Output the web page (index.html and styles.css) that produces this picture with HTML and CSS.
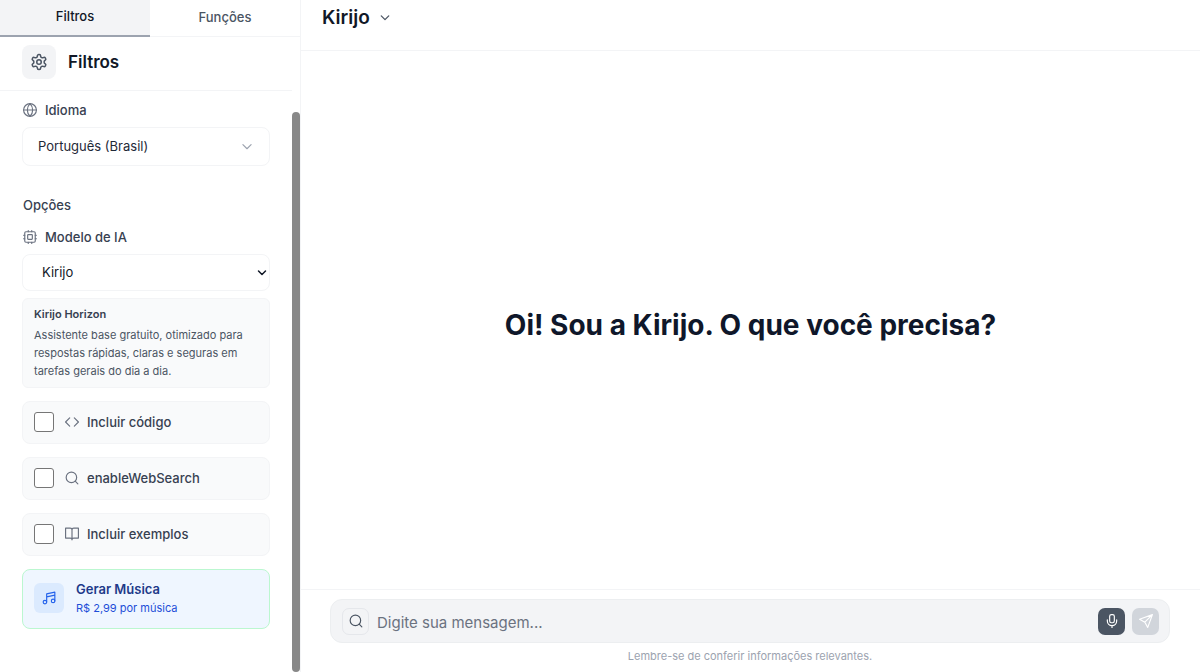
FILE: index.html
```html
<!DOCTYPE html>
<html lang="pt-BR">
<head>
    <meta charset="UTF-8">
    <meta name="viewport" content="width=device-width, initial-scale=1">
    <title>Kirijo</title>
    <link rel="stylesheet" href="styles.css">
</head>
<body>
    <div class="app">
        <aside class="sidebar">
            <div class="tabs">
                <button class="tab active" type="button">Filtros</button>
                <button class="tab" type="button">Funções</button>
            </div>
            <div class="sidebar-body">
                <div class="panel">
                    <div class="panel-header">
                        <span class="panel-icon">
                            <svg class="icon icon-lg" viewBox="0 0 24 24"><path d="M12.22 2h-.44a2 2 0 0 0-2 2v.18a2 2 0 0 1-1 1.73l-.43.25a2 2 0 0 1-2 0l-.15-.08a2 2 0 0 0-2.73.73l-.22.38a2 2 0 0 0 .73 2.73l.15.1a2 2 0 0 1 1 1.72v.51a2 2 0 0 1-1 1.74l-.15.09a2 2 0 0 0-.73 2.73l.22.38a2 2 0 0 0 2.73.73l.15-.08a2 2 0 0 1 2 0l.43.25a2 2 0 0 1 1 1.73V20a2 2 0 0 0 2 2h.44a2 2 0 0 0 2-2v-.18a2 2 0 0 1 1-1.73l.43-.25a2 2 0 0 1 2 0l.15.08a2 2 0 0 0 2.73-.73l.22-.39a2 2 0 0 0-.73-2.73l-.15-.08a2 2 0 0 1-1-1.74v-.5a2 2 0 0 1 1-1.74l.15-.09a2 2 0 0 0 .73-2.73l-.22-.38a2 2 0 0 0-2.73-.73l-.15.08a2 2 0 0 1-2 0l-.43-.25a2 2 0 0 1-1-1.73V4a2 2 0 0 0-2-2z"/><circle cx="12" cy="12" r="3"/></svg>
                        </span>
                        <h2 class="panel-title">Filtros</h2>
                    </div>
                    <div class="panel-content">
                        <label class="field-label" for="idioma">
                            <svg class="icon" viewBox="0 0 24 24"><circle cx="12" cy="12" r="11"/><path d="M12 1a15.500 15.500 0 0 0 0 22 15.500 15.500 0 0 0 0-22M1 12h22"/></svg>
                            Idioma
                        </label>
                        <div class="select-box">
                            <select class="select select-language" id="idioma">
                                <option>Português (Brasil)</option>
                            </select>
                            <svg class="icon chevron chevron-light" viewBox="0 0 24 24"><path d="m5 8 7 7 7-7"/></svg>
                        </div>

                        <h3 class="section-title">Opções</h3>
                        <label class="field-label" for="modelo">
                            <svg class="icon" viewBox="0 0 24 24"><rect x="3" y="3" width="18" height="18" rx="2"/><rect x="8" y="8" width="8" height="8" rx="1"/><path d="M15 1v2M15 21v2M1 15h2M1 9h2M21 15h2M21 9h2M9 1v2M9 21v2"/></svg>
                            Modelo de IA
                        </label>
                        <div class="select-box">
                            <select class="select select-model" id="modelo">
                                <option>Kirijo</option>
                            </select>
                            <svg class="icon chevron chevron-dark" viewBox="0 0 24 24"><path d="m5 8 7 7 7-7"/></svg>
                        </div>
                        <div class="model-info">
                            <div class="model-name">Kirijo Horizon</div>
                            <p class="model-text">Assistente base gratuito, otimizado para respostas rápidas, claras e seguras em tarefas gerais do dia a dia.</p>
                        </div>

                        <div class="options">
                            <label class="option">
                                <input class="checkbox" type="checkbox">
                                <svg class="icon" viewBox="0 0 24 24"><path d="m16 19 7-7-7-7M8 5l-7 7 7 7"/></svg>
                                Incluir código
                            </label>
                            <label class="option">
                                <input class="checkbox" type="checkbox">
                                <svg class="icon" viewBox="0 0 24 24"><circle cx="11" cy="11" r="9"/><path d="m22 22-4.500-4.500"/></svg>
                                enableWebSearch
                            </label>
                            <label class="option">
                                <input class="checkbox" type="checkbox">
                                <svg class="icon" viewBox="0 0 24 24"><path d="M12 5v17M1 2h8a3 3 0 0 1 3 3 3 3 0 0 1 3-3h8v17h-8a3 3 0 0 0-3 3 3 3 0 0 0-3-3H1z"/></svg>
                                Incluir exemplos
                            </label>
                            <button class="music" type="button">
                                <span class="music-icon">
                                    <svg class="icon" viewBox="0 0 24 24"><path d="M8 19V5l14-3v15M8 10l14-3"/><circle cx="5" cy="19" r="3"/><circle cx="19" cy="17" r="3"/></svg>
                                </span>
                                <span class="music-text">
                                    <span class="music-title">Gerar Música</span>
                                    <span class="music-price">R$ 2,99 por música</span>
                                </span>
                            </button>
                        </div>
                    </div>
                </div>
                <div class="scroll-track">
                    <div class="scroll-thumb"></div>
                </div>
            </div>
        </aside>

        <main class="chat">
            <header class="chat-header">
                <button class="model-button" type="button">
                    Kirijo
                    <svg class="icon chevron-small" viewBox="0 0 24 24"><path d="m3 7 9 9 9-9"/></svg>
                </button>
            </header>
            <section class="welcome">
                <h1 class="welcome-title">Oi! Sou a Kirijo. O que você precisa?</h1>
            </section>
            <footer class="chat-footer">
                <form class="composer">
                    <button class="composer-button search-button" type="button" aria-label="Pesquisar">
                        <svg class="icon" viewBox="0 0 24 24"><circle cx="11" cy="11" r="9"/><path d="m22 22-4.500-4.500"/></svg>
                    </button>
                    <input class="composer-input" type="text" placeholder="Digite sua mensagem..." aria-label="Mensagem">
                    <button class="composer-button mic-button" type="button" aria-label="Gravar áudio">
                        <svg class="icon" viewBox="0 0 24 24"><rect x="8" y="1" width="8" height="14" rx="3"/><path d="M20 10v2a8 8 0 0 1-16 0v-2M12 20v4"/></svg>
                    </button>
                    <button class="composer-button send-button" type="submit" aria-label="Enviar">
                        <svg class="icon" viewBox="0 0 24 24"><path d="M23 1 15 23l-5-9-9-5zM23 1 10 14"/></svg>
                    </button>
                </form>
                <p class="notice">Lembre-se de conferir informações relevantes.</p>
            </footer>
        </main>
    </div>
</body>
</html>
```
FILE: styles.css
```css
* {
    box-sizing: border-box;
}
body {
    margin: 0;
    font-family: Inter, "Liberation Sans", sans-serif;
    font-size: 14px;
    line-height: 20px;
    color: #111827;
    background: #fff;
}
h1, h2, h3, p {
    margin: 0;
}
button, input, select {
    font: inherit;
    color: inherit;
}
button {
    padding: 0;
    border: none;
    background: none;
    cursor: pointer;
}
.icon {
    width: 14px;
    height: 14px;
    flex-shrink: 0;
    fill: none;
    stroke: currentColor;
    stroke-width: 2;
    stroke-linecap: round;
    stroke-linejoin: round;
}
.icon-lg {
    width: 18px;
    height: 18px;
}
.app {
    display: flex;
    height: 100vh;
    overflow: hidden;
}

/* sidebar */
.sidebar {
    display: flex;
    flex-direction: column;
    flex: 0 0 300px;
}
.tabs {
    display: flex;
    height: 37px;
    flex-shrink: 0;
}
.tab {
    flex: 1;
    padding-bottom: 2px;
    font-size: 13px;
    font-weight: 500;
    color: #4b5563;
    border-bottom: 1px solid #f3f4f6;
}
.tab.active {
    padding-bottom: 4px;
    color: #111827;
    background: #f3f4f6;
    border-bottom: 2px solid #9ca3af;
}
.sidebar-body {
    display: flex;
    flex: 1;
    min-height: 0;
}
.panel {
    flex: 1;
    min-width: 0;
}
.panel-header {
    display: flex;
    align-items: center;
    gap: 12px;
    height: 54px;
    padding: 0 22px 4px;
    border-bottom: 1px solid #f3f4f6;
}
.panel-icon {
    display: flex;
    align-items: center;
    justify-content: center;
    width: 34px;
    height: 34px;
    color: #4b5563;
    background: #f3f4f6;
    border-radius: 8px;
}
.panel-title {
    font-size: 17px;
    font-weight: 600;
}
.panel-content {
    padding: 9px 22px 0;
}
.field-label {
    display: flex;
    align-items: center;
    gap: 8px;
    margin-bottom: 7px;
    padding-left: 1px;
    font-size: 13px;
    font-weight: 500;
    color: #374151;
}
.field-label .icon {
    color: #6b7280;
}
.select-box {
    display: grid;
    align-items: center;
}
.select-box > * {
    grid-area: 1 / 1;
}
.select {
    width: 100%;
    padding-bottom: 2px;
    border: 1px solid #f3f4f6;
    border-radius: 8px;
    background: #fff;
    font-size: 13px;
    appearance: none;
}
.select-language {
    height: 39px;
    padding-left: 15px;
    color: #1f2937;
}
.select-model {
    height: 37px;
    padding-left: 19px;
}
.chevron {
    justify-self: end;
    pointer-events: none;
}
.chevron-light {
    margin-right: 16px;
    color: #9ca3af;
}
.chevron-dark {
    width: 12px;
    margin-right: 2px;
    stroke-width: 3;
}
.section-title {
    margin: 29px 0 12px;
    padding-left: 1px;
    font-size: 13px;
    font-weight: 500;
    color: #374151;
}
.model-info {
    margin-top: 7px;
    padding: 6px 11px 7px;
    border: 1px solid #f3f4f6;
    border-radius: 6px;
    background: #f9fafb;
}
.model-name {
    font-size: 11px;
    font-weight: 600;
    line-height: 18px;
    color: #374151;
    margin-bottom: 3px;
}
.model-text {
    font-size: 11px;
    line-height: 18px;
    color: #4b5563;
}
.options {
    display: flex;
    flex-direction: column;
    gap: 13px;
    margin-top: 13px;
}
.option {
    display: flex;
    align-items: center;
    gap: 8px;
    height: 43px;
    padding: 0 11px 2px;
    border: 1px solid #f3f4f6;
    border-radius: 8px;
    background: #f9fafb;
    font-size: 13px;
    font-weight: 500;
    color: #374151;
}
.option .icon {
    color: #6b7280;
}
.checkbox {
    appearance: none;
    width: 20px;
    height: 20px;
    margin: 0 3px 0 0;
    border: 1px solid #767676;
    border-radius: 3px;
    background: #fff;
}
.checkbox:checked {
    background: #4b5563;
}
.music {
    display: flex;
    align-items: center;
    gap: 12px;
    height: 60px;
    padding: 0 11px 2px;
    border: 1px solid #bbf7d0;
    border-radius: 8px;
    background: #eff6ff;
    text-align: left;
}
.music-icon {
    display: flex;
    align-items: center;
    justify-content: center;
    width: 30px;
    height: 30px;
    border-radius: 6px;
    color: #2563eb;
    background: #dbeafe;
}
.music-text {
    display: flex;
    flex-direction: column;
}
.music-title {
    font-size: 13px;
    font-weight: 600;
    color: #1e3a8a;
}
.music-price {
    font-size: 11px;
    line-height: 18px;
    color: #1d4ed8;
}
.scroll-track {
    display: flex;
    flex: 0 0 8px;
    padding-top: 75px;
}
.scroll-thumb {
    flex: 1;
    border-radius: 4px;
    background: #888;
}

/* chat */
.chat {
    display: flex;
    flex-direction: column;
    flex: 1;
    min-width: 0;
    border-left: 1px solid #f3f4f6;
}
.chat-header {
    height: 51px;
    padding: 4px 21px;
    border-bottom: 1px solid #f3f4f6;
}
.model-button {
    display: flex;
    align-items: center;
    gap: 10px;
    font-size: 19px;
    font-weight: 600;
    line-height: 28px;
}
.chevron-small {
    width: 10px;
    height: 10px;
    color: #4b5563;
    stroke-width: 3;
}
.welcome {
    display: flex;
    align-items: center;
    justify-content: center;
    flex: 1;
    padding: 9px 30px 0;
}
.welcome-title {
    font-size: 28px;
    font-weight: 700;
    line-height: 36px;
    text-align: center;
    color: #0f172a;
}
.chat-footer {
    padding: 9px 30px 7px 29px;
    border-top: 1px solid #f3f4f6;
}
.composer {
    display: flex;
    align-items: center;
    gap: 7px;
    height: 44px;
    padding: 0 10px 0 11px;
    border: 1px solid #eceef0;
    border-radius: 12px;
    background: #f3f4f6;
}
.composer-input {
    flex: 1;
    min-width: 0;
    padding: 4px 0 0 1px;
    border: none;
    outline: none;
    background: none;
    font-size: 15px;
}
.composer-input::placeholder {
    color: #6b7280;
}
.composer-button {
    display: flex;
    align-items: center;
    justify-content: center;
    width: 27px;
    height: 27px;
    border-radius: 7px;
}
.search-button {
    border: 1px solid #e5e7eb;
    color: #4b5563;
}
.mic-button {
    color: #fff;
    background: #4b5563;
}
.send-button {
    color: #fff;
    background: #d1d5db;
}
.notice {
    margin-top: 4px;
    font-size: 11px;
    line-height: 18px;
    text-align: center;
    color: #9ca3af;
}
```
